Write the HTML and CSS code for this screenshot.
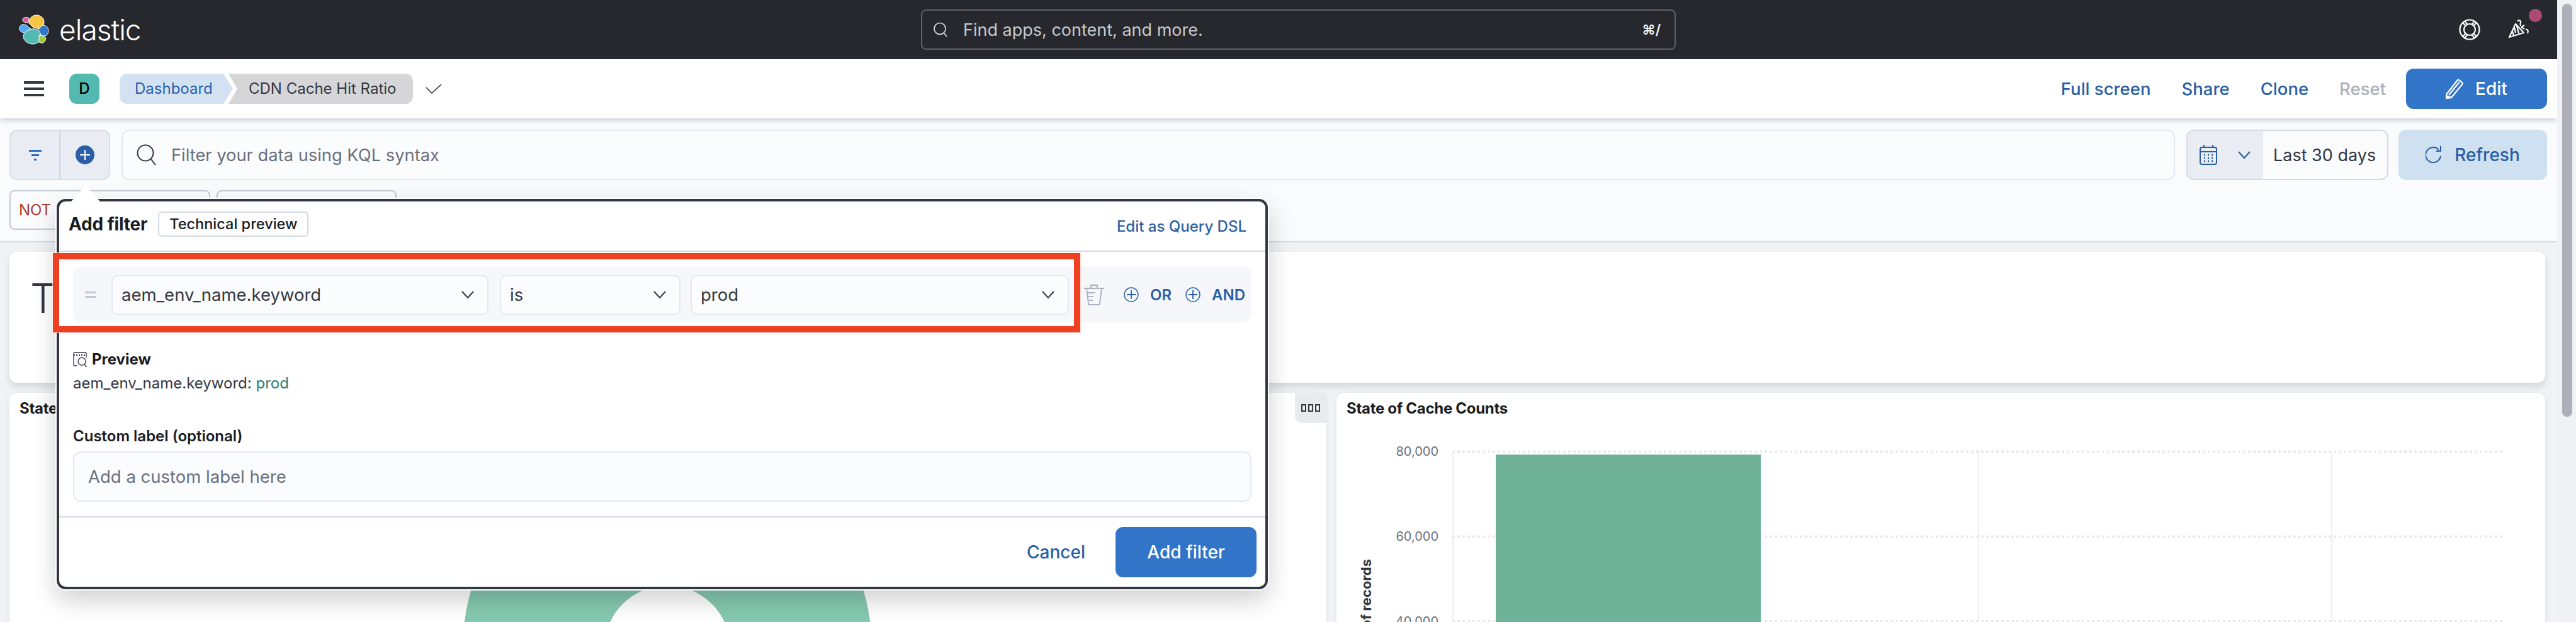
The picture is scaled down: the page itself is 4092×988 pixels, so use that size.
FILE: index.html
```html
<!DOCTYPE html>
<html>
  <head>
    <title>CDN Cache Hit Ratio - Elastic</title>
    <link rel="stylesheet" href="styles.css">
  </head>
  <body>
    <div class="page">
      <header class="topbar">
        <div class="brand">
          <svg class="brand-logo" width="48" height="48" viewBox="0 0 48 48">
            <g stroke="#fff" stroke-width="1">
              <path d="M28 1c7 0 12 5 12 11 0 3-1 6-3 8l-5 3-10-3-6-6c-1-7 5-13 12-13z" fill="#f5c644"/>
              <path d="M7 6c3-2 9-2 9 1 0 2-1 4-2 6-3 0-6-1-8-3 0-2 0-3 1-4z" fill="#e0589a"/>
              <path d="M1 21c1-4 4-6 7-5 2 0 5 1 6 3l5 4c-4 1-8 5-9 7l-5-2c-3-1-5-4-4-7z" fill="#53a9ee"/>
              <path d="M38 17c4 0 9 3 9 9 0 4-3 8-6 8-2 0-5-1-8-2-1-3-1-6-2-8 2-3 4-5 7-7z" fill="#3276ca"/>
              <path d="M21 23c6-1 13 2 14 10 1 8-5 14-13 14C14 47 7 41 7 35c0-6 7-11 14-12z" fill="#54b9b0"/>
              <path d="M32 33l8 2c3 1 3 3 2 6-1 3-4 5-6 4-2 0-5-1-5-2 1-3 2-7 1-10z" fill="#9dc83c"/>
            </g>
          </svg>
          <span class="brand-name">elastic</span>
        </div>
        <div class="global-search">
          <svg class="search-icon" width="24" height="24" viewBox="0 0 24 24" fill="none" stroke="#e4e5e8" stroke-width="1.6">
            <circle cx="11" cy="10.5" r="9"/>
            <path d="M17 17l5 6"/>
          </svg>
          <span class="global-search-text">Find apps, content, and more.</span>
          <span class="global-search-key">⌘/</span>
        </div>
        <div class="topbar-icons">
          <svg class="help-icon" width="34" height="34" viewBox="0 0 34 34" fill="none" stroke="#fff" stroke-width="2.2">
            <circle cx="17" cy="17" r="15.5"/>
            <circle cx="17" cy="17" r="9"/>
            <path d="M6 6l5 5M28 6l-5 5M6 28l5-5M28 28l-5-5M9 3.5l5 6M25 3.5l-5 6M9 30.500l5-6M25 30.500l-5-6"/>
          </svg>
          <span class="news">
            <svg width="36" height="36" viewBox="0 0 36 36" fill="none" stroke="#fff" stroke-width="2.2" stroke-linejoin="round">
              <path d="M2 30L12 9l13 14z"/>
              <path d="M10 14l2 9M7 21l2 6M14 12l3 12"/>
              <path d="M15 5c2-3 6-1 5 2-1 2-1 3 0 5M21 14l5-3M21 14l5 3M28 18c3-1 5 2 3 6"/>
            </svg>
            <span class="news-dot"></span>
          </span>
        </div>
      </header>

      <nav class="appbar">
        <button class="menu-btn"><span></span><span></span><span></span></button>
        <div class="avatar">D</div>
        <div class="crumbs">
          <span class="crumb crumb-first">Dashboard</span>
          <span class="crumb crumb-last">CDN Cache Hit Ratio</span>
        </div>
        <svg class="saved-check" width="26" height="16" viewBox="0 0 26 16" fill="none" stroke="#343741" stroke-width="1.6">
          <path d="M1 6l9 9L25 1"/>
        </svg>
        <div class="appbar-links">
          <a class="link">Full screen</a>
          <a class="link">Share</a>
          <a class="link">Clone</a>
          <a class="link link-off">Reset</a>
          <button class="btn-primary btn-edit">
            <svg width="28" height="32" viewBox="0 0 28 32" fill="none" stroke="#fff" stroke-width="2.200" stroke-linejoin="round">
              <path d="M1 25L19 2c2-1 7 3 8 6L9 30l-8 1z"/>
              <path d="M5 26L22 5"/>
              <path d="M1 27l8 3-8 1z" fill="#fff"/>
            </svg>
            Edit
          </button>
        </div>
      </nav>

      <section class="querybar">
        <div class="filter-btns">
          <div class="filter-btn">
            <svg width="20" height="20" viewBox="0 0 20 20" fill="#2a6cb8">
              <rect x="0" y="2" width="20" height="3"/>
              <rect x="4" y="9" width="12" height="3"/>
              <rect x="8" y="16" width="4" height="3"/>
            </svg>
          </div>
          <div class="filter-btn">
            <svg width="30" height="30" viewBox="0 0 30 30">
              <circle cx="15" cy="15" r="15" fill="#2a5fa8"/>
              <path d="M15 7v16M7 15h16" stroke="#fff" stroke-width="2"/>
            </svg>
          </div>
        </div>
        <div class="kql-input">
          <svg width="32" height="34" viewBox="0 0 32 34" fill="none" stroke="#343741" stroke-width="2">
            <circle cx="14" cy="14" r="12.500"/>
            <path d="M23 24l7 9"/>
          </svg>
          <span>Filter your data using KQL syntax</span>
        </div>
        <div class="date-picker">
          <div class="date-quick">
            <svg width="28" height="32" viewBox="0 0 28 32" fill="none" stroke="#2a5fa3" stroke-width="2">
              <rect x="1" y="4" width="26" height="27" rx="3"/>
              <path d="M1 11h26M7 0v5M21 0v5"/>
              <path d="M7 16h2M13 16h2M19 16h2M7 21h2M13 21h2M19 21h2M7 26h2M13 26h2M19 26h2" stroke-width="3"/>
            </svg>
            <svg width="20" height="12" viewBox="0 0 20 12" fill="none" stroke="#2a5fa3" stroke-width="2.200">
              <path d="M1 1l9 10 9-10"/>
            </svg>
          </div>
          <span class="date-text">Last 30 days</span>
        </div>
        <button class="btn-refresh">
          <svg width="26" height="30" viewBox="0 0 26 30" fill="none" stroke="#2a5fa3" stroke-width="2">
            <path d="M21 7A12 12 0 1 0 24 17"/>
            <path d="M24 1v8h-7"/>
          </svg>
          Refresh
        </button>
      </section>

      <section class="pillbar">
        <div class="pill pill-not"><span class="not-label">NOT</span></div>
        <div class="pill pill-next"></div>
      </section>

      <main class="dashboard">
        <div class="title-card">
          <h2>Top</h2>
        </div>
        <div class="panels">
          <div class="panel panel-left">
            <h3 class="panel-title">State of Cache Percent</h3>
            <svg class="chart" width="2092" height="316" viewBox="0 0 2092 316">
              <circle cx="1045" cy="358" r="212.500" fill="none" stroke="#86c9b0" stroke-width="225"/>
            </svg>
            <div class="panel-tab">
              <svg width="30" height="14" viewBox="0 0 30 14" fill="none" stroke="#343741" stroke-width="2">
                <rect x="1" y="2" width="6" height="10"/>
                <rect x="12" y="2" width="6" height="10"/>
                <rect x="23" y="2" width="6" height="10"/>
              </svg>
            </div>
          </div>
          <div class="panel panel-right">
            <h3 class="panel-title">State of Cache Counts</h3>
            <svg class="chart" width="1920" height="316" viewBox="0 0 1920 316">
              <g stroke="#eceef1" stroke-width="2">
                <path d="M185 45v271M462 45v6M1020 45v271M1581 45v271"/>
              </g>
              <g stroke="#e8eaee" stroke-width="4" stroke-dasharray="4 4">
                <path d="M184 45.500H1856M184 180.500H1856M184 315H1856"/>
              </g>
              <rect x="251" y="48" width="425" height="270" fill="#fff"/>
              <rect x="253" y="50" width="421" height="268" fill="#6fb199"/>
              <g class="chart-tick">
                <text x="162" y="52">80,000</text>
                <text x="162" y="187">60,000</text>
                <text x="162" y="322">40,000</text>
              </g>
              <text class="chart-axis" transform="translate(55 216) rotate(-90)">Count of records</text>
            </svg>
          </div>
        </div>
      </main>

      <div class="popover">
        <div class="popover-arrow"></div>
        <div class="popover-head">
          <strong class="popover-title">Add filter</strong>
          <span class="badge">Technical preview</span>
          <a class="dsl-link">Edit as Query DSL</a>
        </div>
        <div class="popover-body">
          <div class="filter-row">
            <svg class="grip" width="18" height="12" viewBox="0 0 18 12" fill="#c2c8d4">
              <rect x="0" y="1" width="18" height="3"/>
              <rect x="0" y="8" width="18" height="3"/>
            </svg>
            <div class="combo combo-field">
              <span>aem_env_name.keyword</span>
              <svg width="20" height="12" viewBox="0 0 20 12" fill="none" stroke="#343741" stroke-width="2">
                <path d="M1 1l9 10 9-10"/>
              </svg>
            </div>
            <div class="combo combo-op">
              <span>is</span>
              <svg width="20" height="12" viewBox="0 0 20 12" fill="none" stroke="#343741" stroke-width="2">
                <path d="M1 1l9 10 9-10"/>
              </svg>
            </div>
            <div class="combo combo-value">
              <span>prod</span>
              <svg width="20" height="12" viewBox="0 0 20 12" fill="none" stroke="#343741" stroke-width="2">
                <path d="M1 1l9 10 9-10"/>
              </svg>
            </div>
            <svg class="trash" width="32" height="34" viewBox="0 0 32 34" fill="none" stroke="#abb3c1" stroke-width="2">
              <path d="M0 7h32M11 7V2h10v5"/>
              <path d="M4 7l3 24c0 1 1 2 2 2h14c1 0 2-1 2-2l3-24"/>
              <path d="M5 14h12M7 20h8M8 26h6"/>
            </svg>
            <a class="row-action row-or">
              <svg width="24" height="24" viewBox="0 0 24 24" fill="none" stroke="#2a5fa3" stroke-width="1.400">
                <circle cx="12" cy="12" r="11"/>
                <path d="M12 5v14M5 12h14" stroke-width="1.800"/>
              </svg>
              OR
            </a>
            <a class="row-action row-and">
              <svg width="24" height="24" viewBox="0 0 24 24" fill="none" stroke="#2a5fa3" stroke-width="1.400">
                <circle cx="12" cy="12" r="11"/>
                <path d="M12 5v14M5 12h14" stroke-width="1.800"/>
              </svg>
              AND
            </a>
          </div>

          <div class="preview-head">
            <svg width="24" height="24" viewBox="0 0 24 24" fill="none" stroke="#343741" stroke-width="1.300">
              <path d="M6 22H2c-1 0-1-1-1-1V2c0-1 1-1 1-1h18c1 0 1 1 1 1v7"/>
              <path d="M1 5h20" stroke-width="2" stroke-dasharray="2 2"/>
              <circle cx="14" cy="15" r="6"/>
              <path d="M18 20l4 4"/>
            </svg>
            <strong>Preview</strong>
          </div>
          <p class="preview-text">aem_env_name.keyword: <span class="preview-value">prod</span></p>

          <label class="custom-label" for="customLabel">Custom label (optional)</label>
          <input class="custom-input" id="customLabel" type="text" placeholder="Add a custom label here" />
        </div>
        <div class="popover-foot">
          <a class="cancel">Cancel</a>
          <button class="btn-primary btn-add">Add filter</button>
        </div>
        <div class="callout"></div>
      </div>
    </div>
    <div class="scrollbar"><div class="scrollbar-thumb"></div></div>
  </body>
</html>
```

FILE: styles.css
```css
* {
  box-sizing: border-box;
}
html,
body {
  height: 100%;
}
body {
  margin: 0;
  display: flex;
  overflow: hidden;
  font-family: Inter, "Liberation Sans", sans-serif;
  color: #343741;
  background-color: #f1f2f6;
}
a {
  cursor: pointer;
}
button {
  font-family: inherit;
  border: 0;
  cursor: pointer;
}
.page {
  position: relative;
  width: 4062px;
  height: 988px;
  overflow: hidden;
  display: flex;
  flex-direction: column;
}
.scrollbar {
  width: 30px;
  padding: 6px 6px 0 8px;
  background-color: #f0f1f5;
}
.scrollbar-thumb {
  height: 656px;
  border-radius: 8px;
  background-color: #adb0b8;
}

/* top dark bar */
.topbar {
  height: 94px;
  flex: none;
  display: flex;
  align-items: center;
  background-color: #27282e;
}
.brand {
  width: 1463px;
  padding-left: 30px;
  display: flex;
  align-items: center;
  gap: 16px;
}
.brand-name {
  font-size: 46px;
  font-weight: 300;
  letter-spacing: -1px;
  color: #fff;
  line-height: 48px;
}
.global-search {
  width: 1199px;
  height: 64px;
  padding: 0 22px 0 17px;
  display: flex;
  align-items: center;
  border: 2px solid #5f6166;
  border-radius: 8px;
}
.search-icon {
  margin-right: 24px;
}
.global-search-text {
  flex: 1;
  font-size: 27px;
  color: #c6c8cc;
}
.global-search-key {
  font-size: 22px;
  font-weight: 600;
  color: #f2f2f3;
}
.topbar-icons {
  flex: 1;
  display: flex;
  align-items: center;
  justify-content: flex-end;
  padding-right: 42px;
  gap: 44px;
}
.news {
  position: relative;
  display: flex;
}
.news-dot {
  position: absolute;
  top: -15px;
  right: -18px;
  width: 21px;
  height: 21px;
  border-radius: 50%;
  background-color: #ab4a78;
}

/* breadcrumb bar */
.appbar {
  height: 94px;
  flex: none;
  position: relative;
  z-index: 2;
  display: flex;
  align-items: center;
  padding: 0 16px 0 38px;
  background-color: #fff;
  box-shadow: 0 3px 8px rgba(60, 70, 90, 0.25);
}
.menu-btn {
  width: 32px;
  height: 24px;
  padding: 0;
  margin-right: 40px;
  display: flex;
  flex-direction: column;
  justify-content: space-between;
  background: none;
}
.menu-btn span {
  height: 4px;
  background-color: #343741;
}
.avatar {
  width: 48px;
  height: 48px;
  margin-right: 32px;
  border-radius: 12px;
  background-color: #54b9b0;
  color: #000;
  font-size: 24px;
  font-weight: 500;
  line-height: 48px;
  text-align: center;
}
.crumbs {
  display: flex;
  height: 48px;
  font-size: 24px;
  line-height: 48px;
}
.crumb-first {
  width: 180px;
  padding-left: 24px;
  color: #2a5fa8;
  background-color: #d3e2f3;
  border-radius: 12px 0 0 12px;
  clip-path: polygon(0 0, 165px 0, 180px 50%, 165px 100%, 0 100%);
}
.crumb-last {
  width: 293px;
  margin-left: -7px;
  padding-left: 32px;
  color: #343741;
  background-color: #d6d6d9;
  border-radius: 0 12px 12px 0;
  clip-path: polygon(0 0, 100% 0, 100% 100%, 0 100%, 14px 50%);
}
.saved-check {
  margin-left: 20px;
}
.appbar-links {
  flex: 1;
  display: flex;
  align-items: center;
  justify-content: flex-end;
  gap: 49px;
}
.link {
  font-size: 27.5px;
  font-weight: 500;
  color: #2a5fa3;
}
.link-off {
  color: #abb0bb;
}
.btn-primary {
  background-color: #3274c7;
  color: #fff;
  font-size: 28px;
  font-weight: 500;
  border-radius: 12px;
}
.btn-edit {
  width: 224px;
  height: 64px;
  margin-left: -17px;
  display: flex;
  align-items: center;
  justify-content: center;
  gap: 19px;
}

/* query row */
.querybar {
  flex: none;
  display: flex;
  gap: 18px;
  padding: 18px 16px 0 15px;
  background-color: #fafbfd;
}
.filter-btns {
  width: 160px;
  height: 80px;
  display: flex;
  border: 2px solid #d8dde8;
  border-radius: 12px;
  background-color: #e9edf3;
}
.filter-btn {
  flex: 1;
  display: flex;
  align-items: center;
  justify-content: center;
}
.filter-btn:first-child {
  border-right: 2px solid #cfd5e2;
}
.kql-input {
  flex: 1;
  height: 80px;
  padding-left: 22px;
  display: flex;
  align-items: center;
  gap: 23px;
  border: 2px solid #e6e8f1;
  border-radius: 12px;
  background-color: #fbfcfd;
  font-size: 27.3px;
  color: #69707d;
}
.date-picker {
  width: 321px;
  height: 80px;
  display: flex;
  align-items: center;
  border: 2px solid #d3dae6;
  border-radius: 12px;
  background-color: #fbfcfd;
  overflow: hidden;
}
.date-quick {
  width: 120px;
  height: 100%;
  padding: 0 20px 0 19px;
  display: flex;
  align-items: center;
  justify-content: space-between;
  background-color: #e9edf3;
}
.date-text {
  margin-left: 16px;
  font-size: 27px;
  color: #343741;
}
.btn-refresh {
  width: 236px;
  height: 80px;
  margin-left: -2px;
  display: flex;
  align-items: center;
  justify-content: center;
  gap: 20px;
  border-radius: 12px;
  background-color: #cfe0f1;
  color: #2a5fa3;
  font-size: 28px;
  font-weight: 500;
}

/* filter pills row */
.pillbar {
  flex: none;
  display: flex;
  gap: 10px;
  padding: 16px 0 18px 15px;
  background-color: #fafbfd;
  border-bottom: 2px solid #d3dae6;
}
.pill {
  height: 63px;
  border: 2px solid #c5cad5;
  border-radius: 8px;
  background-color: #fbfcfd;
}
.pill-not {
  width: 319px;
  padding-left: 13px;
  line-height: 59px;
}
.pill-next {
  width: 286px;
}
.not-label {
  font-size: 24px;
  color: #b0392b;
}

/* dashboard */
.dashboard {
  flex: 1;
  min-height: 0;
  padding: 15px 19px 0 15px;
  display: flex;
  flex-direction: column;
  gap: 16px;
}
.title-card {
  height: 208px;
  flex: none;
  padding: 35px 0 0 33px;
  background-color: #fff;
  border-radius: 12px;
  box-shadow: 0 6px 12px rgba(0, 0, 0, 0.12);
}
.title-card h2 {
  margin: 0;
  font-size: 64px;
  font-weight: 300;
  color: #343741;
}
.panels {
  flex: 1;
  display: flex;
  gap: 16px;
}
.panel {
  position: relative;
  background-color: #fff;
  border-radius: 12px 12px 0 0;
  box-shadow: 0 2px 8px rgba(0, 0, 0, 0.08);
}
.panel-left {
  width: 2092px;
  flex: none;
}
.panel-right {
  flex: 1;
}
.panel-title {
  height: 48px;
  margin: 0;
  padding-left: 16px;
  font-size: 24px;
  font-weight: 700;
  line-height: 50px;
  letter-spacing: -0.3px;
  color: #1a1c21;
}
.chart {
  display: block;
}
.chart-tick text {
  font-size: 20px;
  fill: #69707d;
  text-anchor: end;
}
.chart-axis {
  font-size: 22px;
  font-weight: 700;
  fill: #343741;
  text-anchor: end;
}
.panel-tab {
  position: absolute;
  top: 0;
  right: 0;
  width: 50px;
  height: 48px;
  display: flex;
  align-items: center;
  justify-content: center;
  background-color: #e9eaed;
  border-radius: 0 0 0 12px;
}

/* add filter popover */
.popover {
  position: absolute;
  left: 90px;
  top: 316px;
  z-index: 5;
  width: 1924px;
  height: 620px;
  display: flex;
  flex-direction: column;
  border: 4px solid #343741;
  border-radius: 14px;
  background-color: #fff;
  box-shadow: 0 0 0 2px #fff, 0 16px 40px rgba(0, 0, 0, 0.2);
}
.popover-arrow {
  position: absolute;
  left: 19px;
  top: -26px;
  width: 46px;
  height: 26px;
  background-color: #fff;
  clip-path: polygon(50% 0, 100% 100%, 0 100%);
}
.popover-head {
  height: 80px;
  flex: none;
  display: flex;
  align-items: center;
  padding: 0 30px 6px 15px;
  border-bottom: 2px solid #d3dae6;
}
.popover-title {
  font-size: 28px;
  font-weight: 700;
  letter-spacing: -0.2px;
  color: #1a1c21;
}
.badge {
  height: 40px;
  margin-left: 17px;
  padding: 0 16px;
  font-size: 23.5px;
  font-weight: 500;
  line-height: 36px;
  color: #1a1c21;
  border: 2px solid #d3dae6;
  border-radius: 6px;
}
.dsl-link {
  margin: 6px 0 0 auto;
  font-size: 24px;
  font-weight: 500;
  color: #2a5fa3;
}
.popover-body {
  flex: 1;
  padding: 24px 22px 0;
  display: flex;
  flex-direction: column;
}
.filter-row {
  height: 88px;
  flex: none;
  display: flex;
  align-items: center;
  padding: 0 13px 0 19px;
  border-radius: 12px;
  background-color: #f5f7fb;
}
.grip {
  margin-right: 24px;
  flex: none;
}
.combo {
  height: 63px;
  flex: none;
  padding: 0 21px 0 14px;
  display: flex;
  align-items: center;
  justify-content: space-between;
  font-size: 27.5px;
  color: #343741;
  border: 2px solid #e6e8f1;
  border-radius: 10px;
  background-color: #fbfcfd;
}
.combo-field {
  width: 599px;
}
.combo-op {
  width: 287px;
  margin-left: 18px;
}
.combo-value {
  width: 601px;
  margin-left: 16px;
}
.trash {
  margin-left: 24px;
  flex: none;
}
.row-action {
  display: flex;
  align-items: center;
  gap: 18px;
  font-size: 24px;
  font-weight: 600;
  color: #2a5fa3;
}
.row-or {
  margin-left: 31px;
}
.row-and {
  margin-left: 22px;
}
.preview-head {
  margin-top: 44px;
  display: flex;
  align-items: center;
  gap: 6px;
  font-size: 24px;
  color: #1a1c21;
}
.preview-text {
  margin: 9px 0 0;
  font-size: 24px;
  color: #343741;
}
.preview-value {
  color: #2d7d6f;
}
.custom-label {
  margin-top: 55px;
  font-size: 24px;
  font-weight: 600;
  color: #1a1c21;
}
.custom-input {
  height: 80px;
  margin-top: 10px;
  padding: 0 22px;
  font-family: inherit;
  font-size: 27.5px;
  border: 2px solid #e6e8f1;
  border-radius: 12px;
  background-color: #fbfcfd;
}
.custom-input::placeholder {
  color: #69707d;
  opacity: 1;
}
.popover-foot {
  height: 112px;
  flex: none;
  display: flex;
  align-items: center;
  justify-content: flex-end;
  padding: 0 14px 0 0;
  gap: 48px;
  border-top: 2px solid #d3dae6;
}
.cancel {
  font-size: 28px;
  font-weight: 500;
  color: #2a5fa3;
}
.btn-add {
  width: 224px;
  height: 80px;
}

/* red annotation box drawn on the screenshot */
.callout {
  position: absolute;
  left: -10px;
  top: 82px;
  width: 1632px;
  height: 126px;
  border: 10px solid #ee4023;
  box-shadow: 0 0 0 1px rgba(255, 235, 230, 0.8);
}
```
